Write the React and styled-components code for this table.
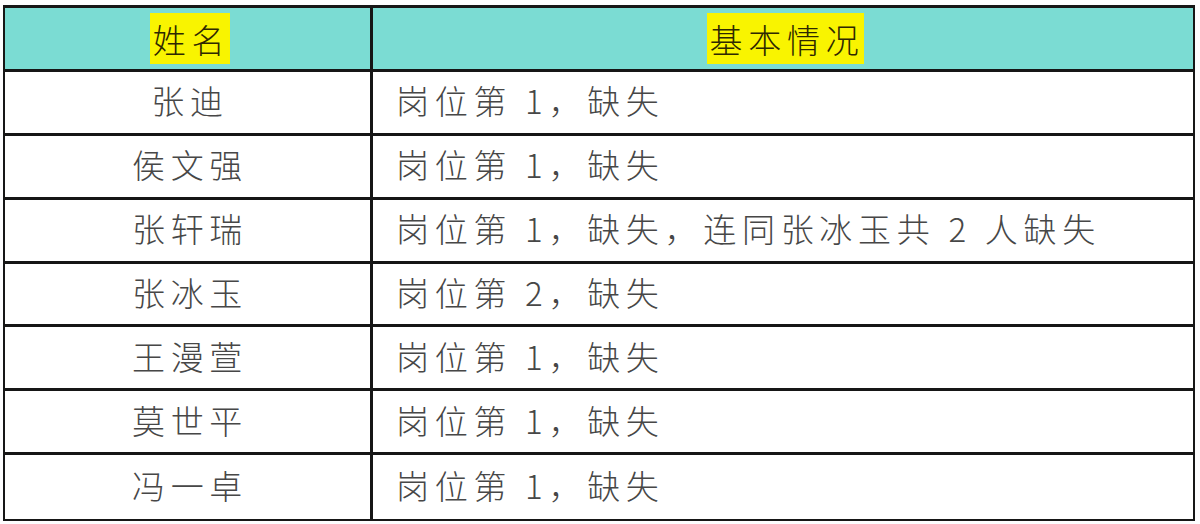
import React from 'react';
import styled, { createGlobalStyle } from 'styled-components';

const GlobalStyle = createGlobalStyle`
  html, body {
    margin: 0;
    padding: 0;
    background: #ffffff;
  }
  body {
    font-family: "Noto Sans CJK SC", "Noto Sans", sans-serif;
  }
`;

const Page = styled.div`
  width: 1200px;
  height: 524px;
  padding: 5px 5px 3px 3px;
  box-sizing: border-box;
  background: #fdfdfe;
`;

const Table = styled.div`
  display: grid;
  grid-template-rows: repeat(8, 1fr);
  height: 100%;
  box-sizing: border-box;
  border: 2px solid #161616;
  border-top-width: 3px;
`;

const Row = styled.div`
  display: grid;
  grid-template-columns: 368px 1fr;
  background: ${(p) => (p.$head ? '#7bdcd3' : '#ffffff')};
  border-bottom: ${(p) => (p.$last ? 'none' : '3px solid #161616')};
  min-height: 0;
`;

const Cell = styled.div`
  display: flex;
  align-items: center;
  justify-content: ${(p) => (p.$center ? 'center' : 'flex-start')};
  padding-left: ${(p) => (p.$center ? '5px' : '23px')};
  padding-bottom: 3px;
  border-right: ${(p) => (p.$first ? '3px solid #161616' : 'none')};
  font-size: 33px;
  font-weight: 300;
  letter-spacing: 5.7px;
  color: #474747;
  white-space: nowrap;
  line-height: 1;
`;

const Mark = styled.span`
  background: #f9f400;
  color: #2e2800;
  padding: 10px 0 8px 3px;
  margin-top: 4px;
`;

const rows = [
  ['张迪', '岗位第 1，缺失'],
  ['侯文强', '岗位第 1，缺失'],
  ['张轩瑞', '岗位第 1，缺失，连同张冰玉共 2 人缺失'],
  ['张冰玉', '岗位第 2，缺失'],
  ['王漫萱', '岗位第 1，缺失'],
  ['莫世平', '岗位第 1，缺失'],
  ['冯一卓', '岗位第 1，缺失'],
];

export default function App() {
  return (
    <Page>
      <GlobalStyle />
      <Table>
        <Row $head>
          <Cell $center $first>
            <Mark>姓名</Mark>
          </Cell>
          <Cell $center>
            <Mark>基本情况</Mark>
          </Cell>
        </Row>
        {rows.map(([name, info], i) => (
          <Row key={name} $last={i === rows.length - 1}>
            <Cell $center $first>{name}</Cell>
            <Cell>{info}</Cell>
          </Row>
        ))}
      </Table>
    </Page>
  );
}
